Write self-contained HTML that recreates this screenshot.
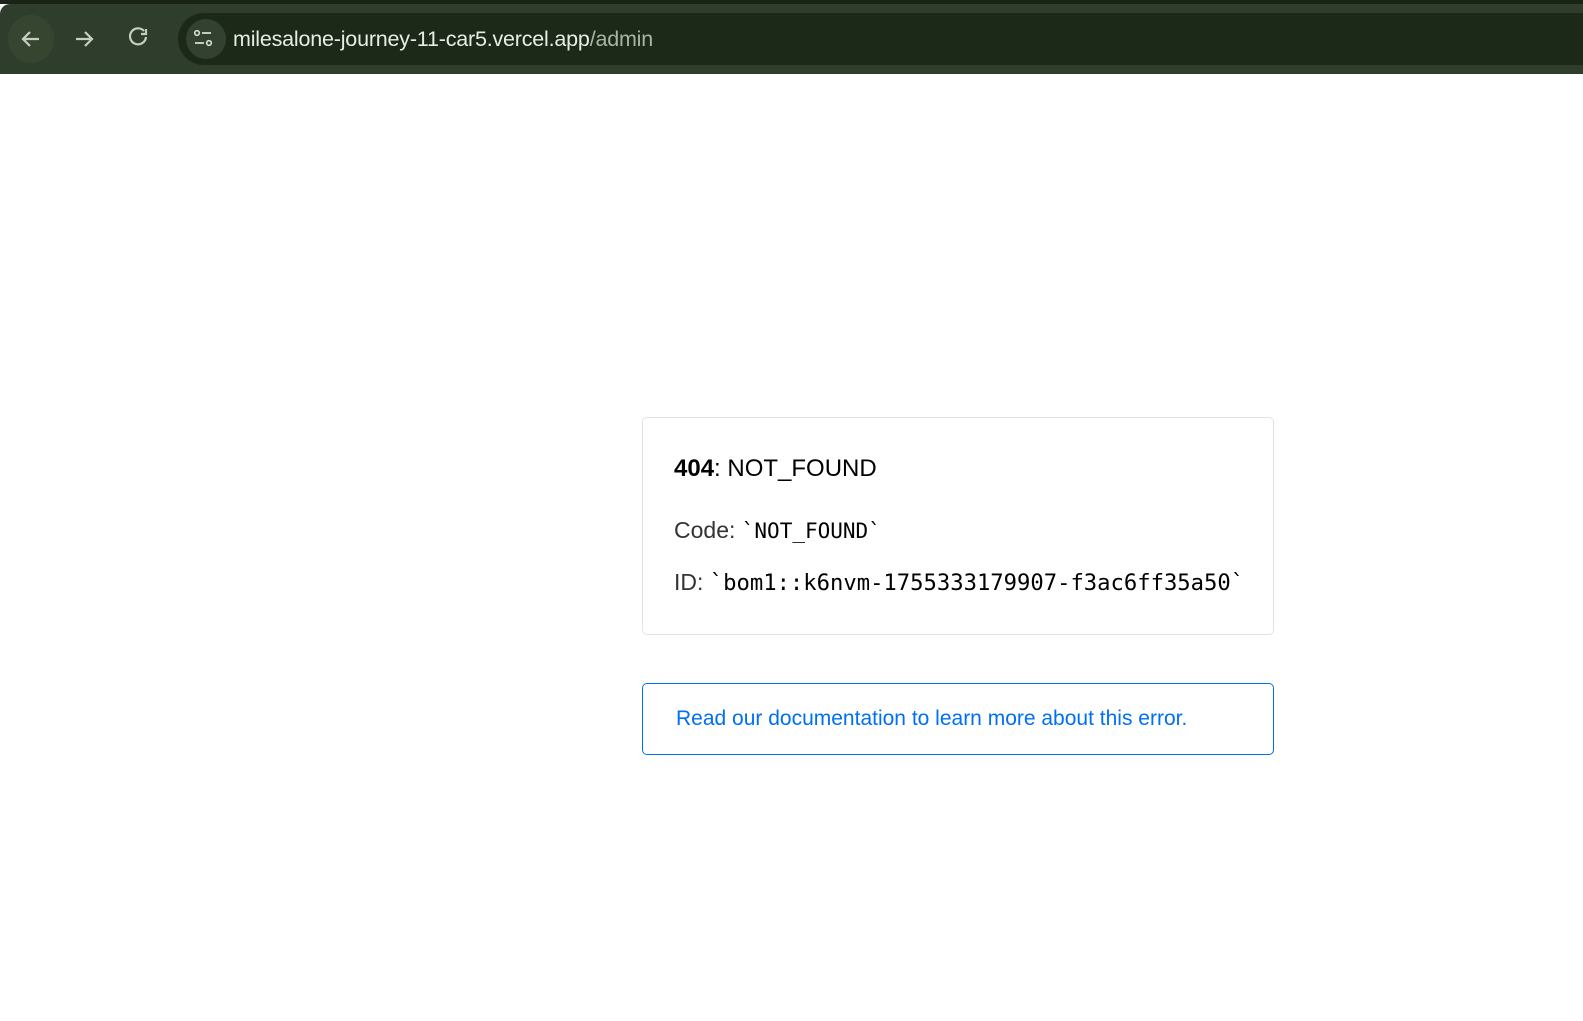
<!DOCTYPE html>
<html><head><meta charset="utf-8"><style>
body{margin:0;width:1583px;height:1021px;background:#fff;position:relative;overflow:hidden;font-family:"Liberation Sans",Arial,sans-serif}
.top{position:absolute;left:0;top:0;width:1583px;height:4px;background:#1a2416}
.bar{position:absolute;left:0;top:4px;width:1583px;height:70px;background:#2f3d2d;border-radius:10px 0 0 0}
.url{position:absolute;left:178px;top:13px;width:1406px;height:52px;background:#1c2818;border-radius:26px 0 0 26px}
.ic{position:absolute;top:17px}
.t{position:absolute;left:233px;top:27px;color:#e8ece6;font-size:21.5px;letter-spacing:-0.2px}
.t span{color:#aab4a6}
.card{position:absolute;left:642px;top:417px;width:630px;height:216px;border:1px solid #e3e3e3;border-radius:5px}
.p{position:absolute;left:31px;color:#333;font-size:23px}
.m{font-family:"DejaVu Sans Mono",monospace;color:#000;font-size:22.2px}
.link{position:absolute;left:642px;top:683px;width:630px;height:70px;border:1px solid #0070f3;border-radius:5px}
.link div{position:absolute;left:33px;top:23px;color:#0070f3;font-size:21px}
</style></head><body>
<div class="top"></div>
<div class="bar"></div>
<div style="position:absolute;left:8px;top:15px;width:46px;height:48px;border-radius:24px;background:#36452f"></div>
<svg class="ic" style="left:19px" width="24" height="44" viewBox="0 0 24 44"><path d="M20 22H5M11 15l-7 7 7 7" stroke="#c6cec2" stroke-width="2.2" fill="none"/></svg>
<svg class="ic" style="left:73px" width="24" height="44" viewBox="0 0 24 44"><path d="M3 22h15M12 15l7 7-7 7" stroke="#c6cec2" stroke-width="2.2" fill="none"/></svg>
<svg class="ic" style="left:127px" width="24" height="44" viewBox="0 0 24 44"><path d="M19 20a8 8 0 1 1-2-6" stroke="#c6cec2" stroke-width="2.2" fill="none"/><path d="M19 12v5h-5" stroke="#c6cec2" stroke-width="2.2" fill="none"/></svg>
<div class="url"></div>
<div style="position:absolute;left:186px;top:19px;width:40px;height:40px;border-radius:20px;background:#334230"></div>
<svg style="position:absolute;left:193px;top:28px" width="22" height="22" viewBox="0 0 22 22"><circle cx="4" cy="5" r="2.3" stroke="#d8ded4" stroke-width="1.6" fill="none"/><path d="M9 5h9M2 15h9" stroke="#d8ded4" stroke-width="1.8"/><circle cx="16" cy="15" r="2.3" stroke="#d8ded4" stroke-width="1.6" fill="none"/></svg>
<div class="t">milesalone-journey-11-car5.vercel.app<span>/admin</span></div>
<div class="card">
<div class="p" style="top:37px;color:#000;font-size:24px"><b>404</b>: NOT_FOUND</div>
<div class="p" style="top:99px">Code: <span class="m" style="font-size:21px">`NOT_FOUND`</span></div>
<div class="p" style="top:151px">ID: <span class="m">`bom1::k6nvm-1755333179907-f3ac6ff35a50`</span></div>
</div>
<div class="link"><div>Read our documentation to learn more about this error.</div></div>
</body></html>
